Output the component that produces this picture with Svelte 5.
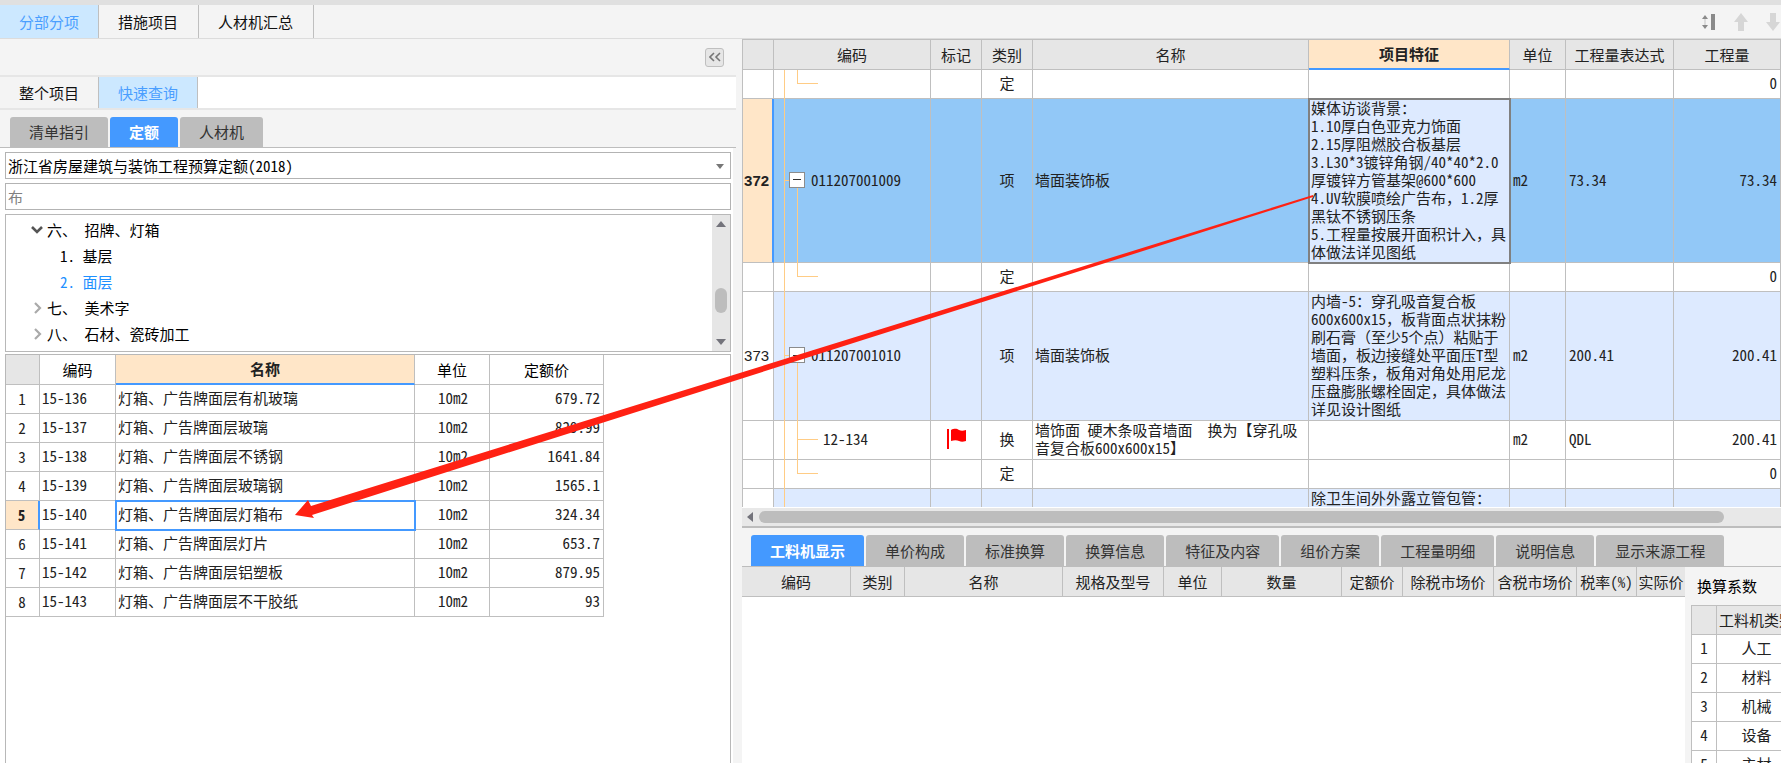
<script lang="ts">
    interface Quota {
        code: string;
        name: string;
        unit: string;
        price: string;
    }

    interface BillRow {
        no?: string;
        code?: string;
        node: string;
        flag?: boolean;
        kind: string;
        name?: string;
        feature?: string;
        unit?: string;
        expr?: string;
        qty?: string;
        tone?: string;
    }

    let mainTabs = ['分部分项', '措施项目', '人材机汇总'];
    let sideTabs = ['整个项目', '快速查询'];
    let queryTabs = ['清单指引', '定额', '人材机'];
    let detailTabs = ['工料机显示', '单价构成', '标准换算', '换算信息', '特征及内容', '组价方案', '工程量明细', '说明信息', '显示来源工程'];
    let detailCols = ['编码', '类别', '名称', '规格及型号', '单位', '数量', '定额价', '除税市场价', '含税市场价', '税率(%)', '实际价'];
    let factors = ['人工', '材料', '机械', '设备', '主材'];

    let mainTab = '分部分项';
    let sideTab = '快速查询';
    let queryTab = '定额';
    let detailTab = '工料机显示';
    let keyword = '布';
    let chapter = '面层';
    let selected = 4;

    let quotas: Quota[] = [
        { code: '15-136', name: '灯箱、广告牌面层有机玻璃', unit: '10m2', price: '679.72' },
        { code: '15-137', name: '灯箱、广告牌面层玻璃', unit: '10m2', price: '829.99' },
        { code: '15-138', name: '灯箱、广告牌面层不锈钢', unit: '10m2', price: '1641.84' },
        { code: '15-139', name: '灯箱、广告牌面层玻璃钢', unit: '10m2', price: '1565.1' },
        { code: '15-140', name: '灯箱、广告牌面层灯箱布', unit: '10m2', price: '324.34' },
        { code: '15-141', name: '灯箱、广告牌面层灯片', unit: '10m2', price: '653.7' },
        { code: '15-142', name: '灯箱、广告牌面层铝塑板', unit: '10m2', price: '879.95' },
        { code: '15-143', name: '灯箱、广告牌面层不干胶纸', unit: '10m2', price: '93' }
    ];

    let bill: BillRow[] = [
        { node: 'last', kind: '定', qty: '0' },
        {
            no: '372', code: '011207001009', node: 'parent', kind: '项', name: '墙面装饰板',
            feature: '媒体访谈背景：\n1.10厚白色亚克力饰面\n2.15厚阻燃胶合板基层\n3.L30*3镀锌角钢/40*40*2.0\n厚镀锌方管基架@600*600\n4.UV软膜喷绘广告布，1.2厚\n黑钛不锈钢压条\n5.工程量按展开面积计入，具\n体做法详见图纸',
            unit: 'm2', expr: '73.34', qty: '73.34', tone: 'current'
        },
        { node: 'last', kind: '定', qty: '0' },
        {
            no: '373', code: '011207001010', node: 'parent', kind: '项', name: '墙面装饰板',
            feature: '内墙-5：穿孔吸音复合板\n600x600x15，板背面点状抹粉\n刷石膏（至少5个点）粘贴于\n墙面，板边接缝处平面压T型\n塑料压条，板角对角处用尼龙\n压盘膨胀螺栓固定，具体做法\n详见设计图纸',
            unit: 'm2', expr: '200.41', qty: '200.41', tone: 'item'
        },
        {
            code: '12-134', node: 'child', flag: true, kind: '换',
            name: '墙饰面 硬木条吸音墙面　换为【穿孔吸\n音复合板600x600x15】',
            unit: 'm2', expr: 'QDL', qty: '200.41'
        },
        { node: 'last', kind: '定', qty: '0' },
        { node: 'none', kind: '', feature: '除卫生间外外露立管包管：', tone: 'item' }
    ];

    // one array per line, odd entries are the full-width marks
    function lines(text = '') {
        return text.split('\n').map((line) => line.split(/([，：（）　])/));
    }
</script>

<main>
    <nav class="main-tabs">
        {#each mainTabs as tab}
            <button class="tab" class:active={tab === mainTab} on:click={() => (mainTab = tab)}>{tab}</button>
        {/each}
        <div class="tools">
            <button class="icon" aria-label="行高">
                <svg width="16" height="18" viewBox="0 0 16 18">
                    <path d="M1 6 L4 2 L7 6 Z M1 12 L4 16 L7 12 Z" fill="#8a8a8a" />
                    <path d="M4 6 V12" stroke="#c4c4c4" />
                    <rect x="10" y="1" width="4" height="16" fill="#8a8a8a" />
                </svg>
            </button>
            <button class="icon" aria-label="上移">
                <svg width="16" height="20" viewBox="0 0 16 20"><path d="M8 1 L15 10 H11 V19 H5 V10 H1 Z" fill="#d6d6d6" /></svg>
            </button>
            <button class="icon" aria-label="下移">
                <svg width="16" height="20" viewBox="0 0 16 20"><path d="M8 19 L15 10 H11 V1 H5 V10 H1 Z" fill="#d6d6d6" /></svg>
            </button>
        </div>
    </nav>

    <div class="work">
        <aside>
            <div class="panel-head">
                <button class="collapse" aria-label="收起">
                    <svg width="12" height="10" viewBox="0 0 12 10"><path d="M5 1 L1 5 L5 9 M11 1 L7 5 L11 9" fill="none" stroke="#777" stroke-width="1.6" /></svg>
                </button>
            </div>
            <div class="side-tabs">
                {#each sideTabs as tab}
                    <button class="tab" class:active={tab === sideTab} on:click={() => (sideTab = tab)}>{tab}</button>
                {/each}
            </div>
            <div class="pills query">
                {#each queryTabs as tab}
                    <button class="pill" class:active={tab === queryTab} on:click={() => (queryTab = tab)}>{tab}</button>
                {/each}
            </div>

            <div class="side-body">
                <div class="combo">
                    <select aria-label="定额库">
                        <option>浙江省房屋建筑与装饰工程预算定额(2018)</option>
                    </select>
                    <svg class="caret" width="8" height="5" viewBox="0 0 8 5"><path d="M0 0 H8 L4 5 Z" fill="#777" /></svg>
                </div>
                <input class="search" type="text" aria-label="查询条件" bind:value={keyword} />

                <div class="tree-box">
                    <div class="tree">
                        <button class="branch">
                            <svg width="12" height="8" viewBox="0 0 12 8"><path d="M1 1 L6 6 L11 1" fill="none" stroke="#555" stroke-width="2.6" /></svg>
                            <span>六、 招牌、灯箱</span>
                        </button>
                        <button class="leaf" class:active={chapter === '基层'} on:click={() => (chapter = '基层')}>1. 基层</button>
                        <button class="leaf" class:active={chapter === '面层'} on:click={() => (chapter = '面层')}>2. 面层</button>
                        <button class="branch">
                            <svg width="12" height="12" viewBox="0 0 12 12"><path d="M4 1 L9 6 L4 11" fill="none" stroke="#aaa" stroke-width="2.2" /></svg>
                            <span>七、 美术字</span>
                        </button>
                        <button class="branch">
                            <svg width="12" height="12" viewBox="0 0 12 12"><path d="M4 1 L9 6 L4 11" fill="none" stroke="#aaa" stroke-width="2.2" /></svg>
                            <span>八、 石材、瓷砖加工</span>
                        </button>
                    </div>
                    <div class="vscroll">
                        <svg width="10" height="6" viewBox="0 0 10 6"><path d="M0 6 H10 L5 0 Z" fill="#73737b" /></svg>
                        <div class="thumb"></div>
                        <svg width="10" height="6" viewBox="0 0 10 6"><path d="M0 0 H10 L5 6 Z" fill="#73737b" /></svg>
                    </div>
                </div>

                <div class="quota-box">
                    <table class="quota">
                        <thead>
                            <tr>
                                <th class="q-no"></th>
                                <th class="q-code">编码</th>
                                <th class="q-name focus">名称</th>
                                <th class="q-unit">单位</th>
                                <th class="q-price">定额价</th>
                            </tr>
                        </thead>
                        <tbody>
                            {#each quotas as q, i}
                                <tr class:selected={i === selected} on:click={() => (selected = i)}>
                                    <td class="no">{i + 1}</td>
                                    <td>{q.code}</td>
                                    <td class="name">{q.name}</td>
                                    <td class="center">{q.unit}</td>
                                    <td class="right">{q.price}</td>
                                </tr>
                            {/each}
                        </tbody>
                    </table>
                </div>
            </div>
        </aside>

        <section class="content">
            <div class="bill-box">
                <table class="bill">
                    <thead>
                        <tr>
                            <th class="b-no"></th>
                            <th class="b-code">编码</th>
                            <th class="b-mark">标记</th>
                            <th class="b-mark">类别</th>
                            <th>名称</th>
                            <th class="b-feature focus">项目特征</th>
                            <th class="b-unit">单位</th>
                            <th class="b-expr">工程量表达式</th>
                            <th class="b-qty">工程量</th>
                        </tr>
                    </thead>
                    <tbody>
                        {#each bill as row}
                            <tr class={row.tone}>
                                <td class="no">{row.no ?? ''}</td>
                                <td class="code {row.node}">
                                    <i class="trunk"></i>
                                    {#if row.node !== 'none'}<i class="stem"></i><i class="arm"></i>{/if}
                                    {#if row.node === 'parent'}<button class="toggle" aria-label="折叠"></button>{/if}
                                    {row.code ?? ''}
                                </td>
                                <td class="center">
                                    {#if row.flag}
                                        <svg class="flag" width="20" height="22" viewBox="0 0 20 22">
                                            <path d="M1 1 H3 V21 H1 Z" fill="#f00" />
                                            <path d="M5 2 C9 0 11 1 13 2 C15 3 17 3 20 2 V13 C17 14 15 14 13 13 C11 12 8 12 5 13 Z" fill="#f00" />
                                        </svg>
                                    {/if}
                                </td>
                                <td class="center">{row.kind}</td>
                                {#each [row.name, row.feature] as text, n}
                                    <td class="text" class:feature={n === 1}>
                                        {#each lines(text) as line}
                                            <div class="line">{#each line as part, i}<span class:wide={i % 2}>{part}</span>{/each}</div>
                                        {/each}
                                    </td>
                                {/each}
                                <td>{row.unit ?? ''}</td>
                                <td>{row.expr ?? ''}</td>
                                <td class="right">{row.qty ?? ''}</td>
                            </tr>
                        {/each}
                    </tbody>
                </table>
            </div>
            <div class="hscroll">
                <svg width="6" height="10" viewBox="0 0 6 10"><path d="M6 0 V10 L0 5 Z" fill="#73737b" /></svg>
                <div class="thumb"></div>
            </div>

            <div class="detail">
                <div class="pills">
                    {#each detailTabs as tab}
                        <button class="pill" class:active={tab === detailTab} on:click={() => (detailTab = tab)}>{tab}</button>
                    {/each}
                </div>
                <div class="detail-body">
                    <div class="parts-box">
                        <table class="parts">
                            <thead>
                                <tr>
                                    {#each detailCols as col, i}
                                        <th class="c{i}">{col}</th>
                                    {/each}
                                </tr>
                            </thead>
                        </table>
                    </div>
                    <div class="factor-box">
                        <h2>换算系数</h2>
                        <table class="factor">
                            <thead>
                                <tr>
                                    <th class="f-no"></th>
                                    <th class="f-kind">工料机类别</th>
                                </tr>
                            </thead>
                            <tbody>
                                {#each factors as f, i}
                                    <tr>
                                        <td class="center">{i + 1}</td>
                                        <td class="center">{f}</td>
                                    </tr>
                                {/each}
                            </tbody>
                        </table>
                    </div>
                </div>
            </div>
        </section>
    </div>

    <svg class="pointer" width="1030" height="330" viewBox="290 192 1030 330">
        <path d="M295 515 L308 500 L311 506 L1313 195 L1313 197 L312 515 L314 518 Z" fill="#ff2113" />
    </svg>
</main>

<style>
    :global(body) {
        margin: 0;
    }

    main {
        position: relative;
        display: flex;
        flex-direction: column;
        box-sizing: border-box;
        height: 100vh;
        overflow: hidden;
        border-top: 5px solid #e0e0e0;
        background: #f4f4f4;
        color: #222;
        font: 15px/18px "Noto Sans CJK SC", sans-serif;
        font-feature-settings: "hwid";
    }

    main :global(*) {
        box-sizing: border-box;
    }

    button,
    select,
    input {
        margin: 0;
        padding: 0;
        border: 0;
        background: none;
        color: inherit;
        font: inherit;
        font-feature-settings: inherit;
        white-space: nowrap;
    }

    svg {
        display: block;
        flex: none;
    }

    .wide {
        font-feature-settings: normal;
    }

    /* tabs */
    .main-tabs,
    .side-tabs {
        display: flex;
        flex: none;
        height: 34px;
        border-bottom: 1px solid #dcdcdc;
    }

    .tab {
        padding: 0 19px;
        border-right: 1px solid #bfbfbf;
        background: #f4f4f4;
        color: #111;
    }

    .main-tabs .tab + .tab {
        padding: 0 20px 0 19px;
    }

    .tab.active {
        background: #cce8ff;
        color: #4a9eff;
    }

    .side-tabs {
        height: 35px;
        border-top: 2px solid #e6e6e6;
        border-bottom: 2px solid #e6e6e6;
        background: #fff;
    }

    .tools {
        display: flex;
        align-items: center;
        gap: 16px;
        margin-left: auto;
    }

    .pills {
        display: flex;
        flex: none;
        gap: 2px;
        height: 39px;
        padding: 7px 9px 0;
        border-bottom: 1px solid #bdbdbd;
    }

    .pills.query {
        height: 38px;
        padding: 7px 10px 0;
    }

    .pill {
        padding: 0 19px;
        border-radius: 3px 3px 0 0;
        background: #bdbdbd;
        color: #333;
    }

    .pill.active {
        background: #4499ff;
        color: #fff;
        font-weight: bold;
    }

    /* left side */
    .work {
        display: grid;
        grid-template-columns: minmax(0, 5fr) minmax(0, 7fr);
        flex: 1;
        min-height: 0;
    }

    aside {
        display: flex;
        flex-direction: column;
        min-height: 0;
        padding-right: 6px;
    }

    .panel-head {
        display: flex;
        flex: none;
        align-items: center;
        justify-content: flex-end;
        height: 36px;
        padding-right: 12px;
    }

    .collapse {
        display: flex;
        align-items: center;
        justify-content: center;
        width: 19px;
        height: 19px;
        border: 1px solid #bfbfbf;
        border-radius: 3px;
        background: #e6e6e6;
    }

    .side-body {
        display: flex;
        flex: 1;
        flex-direction: column;
        gap: 4px;
        min-height: 0;
        margin-right: 3px;
        padding: 4px 2px 0 5px;
        background: #fff;
    }

    .combo {
        position: relative;
        flex: none;
        height: 27px;
    }

    .combo select,
    .search {
        width: 100%;
        height: 27px;
        flex: none;
        padding: 0 2px;
        border: 1px solid #b3b3b3;
        background: #fff;
        color: #000;
        appearance: none;
        outline: none;
    }

    .search {
        color: #808080;
    }

    .caret {
        position: absolute;
        right: 7px;
        top: 12px;
    }

    .tree-box {
        display: flex;
        flex: none;
        height: 138px;
        border: 1px solid #b8b8b8;
    }

    .tree {
        display: flex;
        flex: 1;
        flex-direction: column;
        padding-top: 2px;
        color: #000;
    }

    .branch,
    .leaf {
        display: flex;
        align-items: center;
        gap: 4px;
        height: 26px;
        padding-left: 25px;
        white-space: pre;
    }

    .leaf {
        padding-left: 54px;
    }

    .leaf.active {
        color: #1e90ff;
    }

    .vscroll {
        display: flex;
        flex-direction: column;
        align-items: center;
        width: 18px;
        padding: 6px 0;
        background: #e6e6e6;
    }

    .vscroll .thumb {
        width: 12px;
        height: 25px;
        margin: auto 0 26px;
        border-radius: 6px;
        background: #bdbdbd;
    }

    .quota-box {
        flex: 1;
        min-height: 0;
        margin-top: -2px;
        border: 1px solid #b8b8b8;
        border-bottom: 0;
        overflow: hidden;
    }

    /* tables */
    table {
        border-collapse: separate;
        border-spacing: 0;
        table-layout: fixed;
    }

    th,
    td {
        height: 29px;
        padding: 0 3px 2px;
        border-right: 1px solid #bfbfbf;
        border-bottom: 1px solid #bfbfbf;
        text-align: left;
        white-space: nowrap;
    }

    th {
        height: 30px;
        padding: 0;
        background: #e6e6e6;
        font-weight: normal;
        text-align: center;
    }

    th.focus {
        border-bottom: 2px solid #4499ff;
        background: #ffe6c8;
        font-weight: bold;
    }

    .center {
        padding: 0 0 2px;
        text-align: center;
    }

    .right {
        text-align: right;
    }

    .quota {
        width: 598px;
    }

    .quota th:not(.focus):not(.q-no) {
        background: #fff;
        color: #000;
    }

    .q-no { width: 34px; }
    .q-code { width: 76px; }
    .q-name { width: 299px; }
    .q-unit { width: 75px; }

    .quota td {
        padding-left: 2px;
    }

    .quota .no {
        padding-bottom: 0;
        text-align: center;
    }

    .quota .selected .no,
    .bill .current .no {
        border-right: 2px solid #4499ff;
        background: #ffe6c8;
        font-weight: bold;
    }

    .quota .selected .name {
        outline: 2px solid #4499ff;
        outline-offset: -1px;
    }

    /* bill list */
    .content {
        display: flex;
        flex-direction: column;
        min-width: 0;
        min-height: 0;
    }

    .bill-box {
        flex: 1;
        min-height: 0;
        border-top: 1px solid #bfbfbf;
        border-left: 1px solid #bfbfbf;
        background: #fff;
        overflow: hidden;
    }

    .bill {
        width: 100%;
    }

    .b-no { width: 31px; }
    .b-code { width: 157px; }
    .b-mark { width: 51px; }
    .b-feature { width: 201px; }
    .b-unit { width: 56px; }
    .b-expr { width: 108px; }
    .b-qty { width: 107px; }

    .bill .no {
        padding: 0 0 0 1px;
        font-family: "Liberation Sans", sans-serif;
    }

    .current td {
        background: #92c8f7;
    }

    .item td:not(.no) {
        background: #ddeaff;
    }

    .bill .text {
        padding: 0 2px 2px;
    }

    .line {
        white-space: pre;
    }

    .bill .current .feature {
        padding-bottom: 1px;
        background: #ddeaff;
        outline: 2px solid #808080;
        outline-offset: -1px;
    }

    .bill tr:last-child .text {
        vertical-align: top;
    }

    .flag {
        margin: auto;
    }

    .code {
        position: relative;
        padding-left: 37px;
    }

    .code.child {
        padding-left: 49px;
    }

    .trunk,
    .stem,
    .arm,
    .toggle {
        position: absolute;
        background: #ffcc85;
    }

    .trunk {
        top: 0;
        bottom: -1px;
        left: 10px;
        width: 1px;
    }

    .stem {
        top: 0;
        bottom: -1px;
        left: 23px;
        width: 1px;
    }

    .arm {
        top: calc(50% - 1px);
        left: 23px;
        width: 21px;
        height: 1px;
    }

    .last .stem {
        bottom: 50%;
    }

    .parent .stem {
        top: 50%;
    }

    .parent .arm {
        left: 10px;
        width: 6px;
    }

    .toggle {
        top: calc(50% - 9px);
        left: 15px;
        width: 16px;
        height: 16px;
        border: 1px solid #8c8c8c;
        background: #fff;
    }

    .toggle::after {
        content: "";
        display: block;
        height: 1px;
        margin: 0 3px;
        background: #333;
    }

    .hscroll {
        display: flex;
        flex: none;
        align-items: center;
        gap: 6px;
        height: 21px;
        padding: 0 57px 0 5px;
        border-top: 1px solid #fff;
        border-bottom: 2px solid #bdbdbd;
        background: #e8e8e8;
    }

    .hscroll .thumb {
        flex: 1;
        height: 12px;
        border-radius: 6px;
        background: #bdbdbd;
    }

    /* detail */
    .detail {
        display: flex;
        flex: none;
        flex-direction: column;
        height: 235px;
    }

    .detail-body {
        display: flex;
        flex: 1;
        min-height: 0;
    }

    .parts-box {
        flex: 1;
        min-width: 0;
        background: #fff;
        overflow: hidden;
    }

    .parts {
        width: 100%;
    }

    .c0 { width: 109px; }
    .c1 { width: 54px; }
    .c3 { width: 101px; }
    .c4 { width: 58px; }
    .c5 { width: 120px; }
    .c6 { width: 61px; }
    .c7 { width: 91px; }
    .c8 { width: 83px; }
    .c9 { width: 60px; }
    .c10 { width: 48px; border-right: 0; }

    .factor-box {
        flex: none;
        width: 96px;
        padding-left: 6px;
        overflow: hidden;
    }

    h2 {
        margin: 0;
        padding: 10px 6px;
        color: #000;
        font: inherit;
    }

    .factor {
        width: 106px;
        border-top: 1px solid #bfbfbf;
        border-left: 1px solid #bfbfbf;
        background: #fff;
    }

    .f-no { width: 25px; }

    .factor th {
        height: 29px;
    }

    .pointer {
        position: absolute;
        top: 187px;
        left: 290px;
        pointer-events: none;
    }
</style>
